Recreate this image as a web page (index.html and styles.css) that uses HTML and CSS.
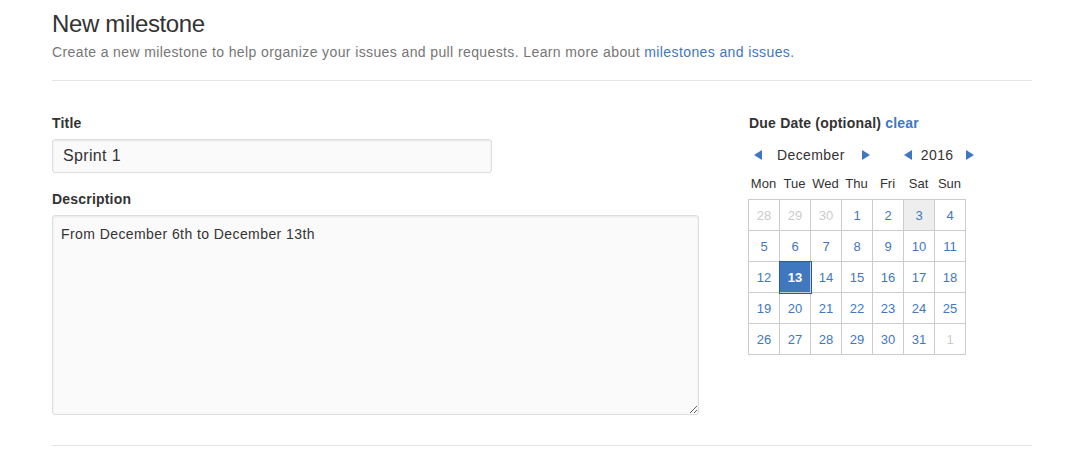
FILE: index.html
```html
<!DOCTYPE html>
<html>
<head>
<meta charset="utf-8">
<link rel="stylesheet" href="styles.css">
</head>
<body>
<div class="container">
  <div class="subhead">
    <h2 class="subhead-title">New milestone</h2>
    <p class="subhead-desc">Create a new milestone to help organize your issues and pull requests. Learn more about <a href="#" class="link">milestones and issues</a>.</p>
  </div>
  <div class="form-row">
    <div class="form-main">
      <label class="label">Title</label>
      <input class="input" type="text" value="Sprint 1">
      <label class="label label-desc">Description</label>
      <textarea class="textarea">From December 6th to December 13th</textarea>
    </div>
    <div class="form-side">
      <label class="label label-due">Due Date (optional) <a href="#" class="link">clear</a></label>
      <div class="cal">
        <div class="cal-nav">
          <div class="cal-group cal-month">
            <span class="arrow arrow-left"></span>
            <span class="cal-name">December</span>
            <span class="arrow arrow-right"></span>
          </div>
          <div class="cal-group cal-year">
            <span class="arrow arrow-left"></span>
            <span class="cal-name">2016</span>
            <span class="arrow arrow-right"></span>
          </div>
        </div>
        <div class="cal-head">
          <span>Mon</span><span>Tue</span><span>Wed</span><span>Thu</span><span>Fri</span><span>Sat</span><span>Sun</span>
        </div>
        <div class="cal-grid">
          <span class="day other">28</span><span class="day other">29</span><span class="day other">30</span><span class="day">1</span><span class="day">2</span><span class="day today">3</span><span class="day">4</span>
          <span class="day">5</span><span class="day">6</span><span class="day">7</span><span class="day">8</span><span class="day">9</span><span class="day">10</span><span class="day">11</span>
          <span class="day">12</span><span class="day selected">13</span><span class="day">14</span><span class="day">15</span><span class="day">16</span><span class="day">17</span><span class="day">18</span>
          <span class="day">19</span><span class="day">20</span><span class="day">21</span><span class="day">22</span><span class="day">23</span><span class="day">24</span><span class="day">25</span>
          <span class="day">26</span><span class="day">27</span><span class="day">28</span><span class="day">29</span><span class="day">30</span><span class="day">31</span><span class="day other">1</span>
        </div>
      </div>
    </div>
  </div>
  <div class="bottom-rule"></div>
</div>
</body>
</html>
```

FILE: styles.css
```css
html, body {
  margin: 0;
  padding: 0;
  background: #fff;
}
body {
  font-family: "Liberation Sans", Arial, sans-serif;
  font-size: 14px;
  color: #333;
}
.container {
  width: 980px;
  margin-left: 52px;
  padding-top: 8px;
}
.subhead {
  border-bottom: 1px solid #e5e5e5;
  padding-bottom: 20px;
}
.subhead-title {
  margin: 0;
  font-size: 24px;
  font-weight: normal;
  line-height: 32px;
  letter-spacing: -0.35px;
  color: #333;
}
.subhead-desc {
  margin: 4px 0 0;
  font-size: 14px;
  line-height: 16px;
  letter-spacing: 0.39px;
  color: #767676;
}
.link {
  color: #4078c0;
  text-decoration: none;
}
.form-row {
  display: flex;
  padding-top: 34px;
}
.form-main {
  width: 646px;
  display: flex;
  flex-direction: column;
}
.form-side {
  margin-left: 50px;
  display: flex;
  flex-direction: column;
}
.label {
  display: block;
  font-weight: bold;
  font-size: 14px;
  line-height: 16px;
  letter-spacing: 0.2px;
  color: #333;
  margin-bottom: 8px;
}
.label-due {
  padding-left: 1px;
}
.label-desc {
  margin-top: 18px;
  margin-bottom: 8px;
}
.input {
  box-sizing: border-box;
  width: 440px;
  height: 34px;
  padding: 5px 10px;
  font-family: "Liberation Sans", Arial, sans-serif;
  font-size: 16px;
  letter-spacing: 0.35px;
  color: #333;
  background: #fafafa;
  border: 1px solid #ddd;
  border-radius: 3px;
  box-shadow: inset 0 1px 2px rgba(0,0,0,0.075);
  outline: none;
  margin: 0;
}
.textarea {
  box-sizing: border-box;
  width: 647px;
  height: 200px;
  padding: 8px 8px;
  font-family: "Liberation Sans", Arial, sans-serif;
  font-size: 14px;
  line-height: 20px;
  letter-spacing: 0.42px;
  color: #333;
  background: #fafafa;
  border: 1px solid #ddd;
  border-radius: 3px;
  box-shadow: inset 0 1px 2px rgba(0,0,0,0.075);
  outline: none;
  margin: 0;
  resize: vertical;
}
.cal {
  width: 218px;
}
.cal-nav {
  display: flex;
  align-items: center;
  height: 20px;
  margin-top: 6px;
  padding-left: 6px;
}
.cal-group {
  display: flex;
  align-items: center;
}
.cal-month .cal-name {
  margin: 0 17px 0 15px;
}
.cal-year {
  margin-left: 34px;
}
.cal-year .cal-name {
  margin: 0 12px 0 9px;
}
.cal-name {
  font-size: 14px;
  letter-spacing: 0.4px;
  color: #333;
}
.arrow {
  width: 0;
  height: 0;
  border-top: 5px solid transparent;
  border-bottom: 5px solid transparent;
}
.arrow-left {
  border-right: 8px solid #4078c0;
}
.arrow-right {
  border-left: 8px solid #4078c0;
}
.cal-head {
  display: grid;
  grid-template-columns: repeat(7, 31px);
  margin-top: 8px;
  height: 20px;
  align-items: center;
  font-size: 13px;
  color: #333;
}
.cal-head span {
  text-align: center;
}
.cal-grid {
  display: grid;
  grid-template-columns: repeat(7, 31px);
  grid-auto-rows: 31px;
  margin-top: 6px;
  border-top: 1px solid #ccc;
  border-left: 1px solid #ccc;
  width: 217px;
}
.day {
  box-sizing: border-box;
  border-right: 1px solid #ccc;
  border-bottom: 1px solid #ccc;
  display: flex;
  align-items: center;
  justify-content: center;
  font-size: 13px;
  color: #4078c0;
}
.day.other {
  color: #ccc;
}
.day.today {
  background: #eee;
}
.day.selected {
  background: #4078c0;
  color: #fff;
  font-weight: bold;
  box-shadow: 0 0 0 1px #2a5a9e;
  position: relative;
}
.bottom-rule {
  margin-top: 30px;
  border-top: 1px solid #e5e5e5;
}
```
